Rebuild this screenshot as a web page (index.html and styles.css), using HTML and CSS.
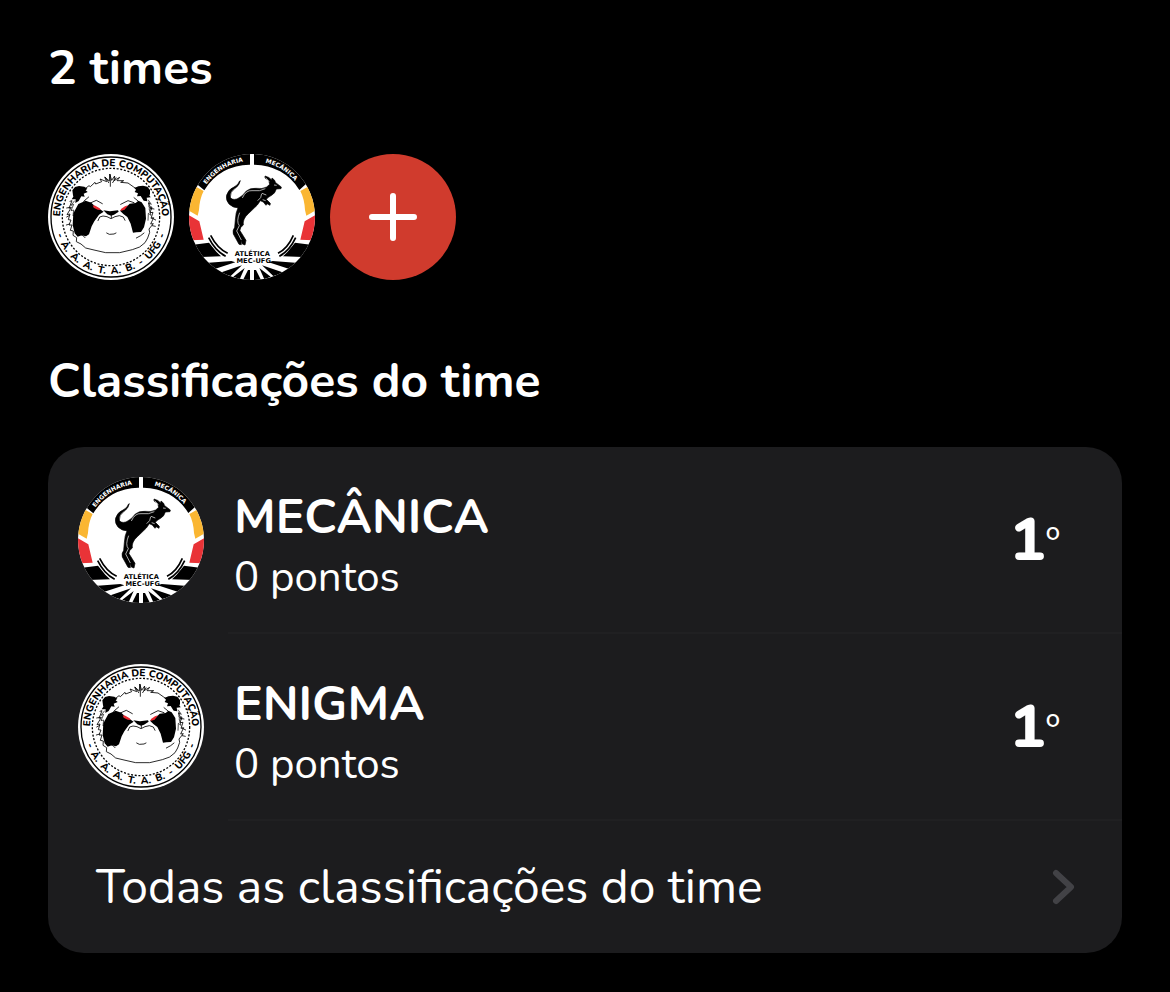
FILE: index.html
```html
<!DOCTYPE html>
<html lang="pt-BR">
<head>
<meta charset="utf-8">
<meta name="viewport" content="width=device-width, initial-scale=1">
<title>Times</title>
<link rel="stylesheet" href="styles.css">
</head>
<body>
<svg class="sprite" aria-hidden="true">
  <symbol id="panda" viewBox="24 26 378 378">
    <circle cx="213" cy="215" r="189" fill="#fff"/>
    <circle cx="213" cy="215" r="180" fill="none" stroke="#000" stroke-width="4"/>
    <path id="panda-top" d="M60 230L60 215A153 153 0 0 1 366 215L366 230" fill="none"/>
    <path id="panda-bottom" d="M42 215A171 171 0 0 0 384 215" fill="none"/>
    <text class="seal-text"><textPath href="#panda-top" startOffset="50%" text-anchor="middle">ENGENHARIA DE COMPUTAÇÃO</textPath></text>
    <text class="seal-text"><textPath href="#panda-bottom" startOffset="50%" text-anchor="middle">-&#160; A.&#160; A.&#160; A.&#160; T.&#160; A.&#160; B.&#160; -&#160; UFG&#160; -</textPath></text>
    <circle cx="213" cy="215" r="146" fill="none" stroke="#000" stroke-width="4" stroke-dasharray="6 5"/>
    <g fill="none" stroke="#000" stroke-width="2.5" stroke-linejoin="round" stroke-linecap="round">
      <path d="M133 132l14-11 4 3 14-13 2 5 18-7-5-8 20 8-6-14 14 12 1-21 6 19 9-13-2 14 17-10-8 10 20 0-9 5 22 2 17 12 14 10M211 88v35M196 96l10 16M228 97l-10 15"/>
      <path d="M90 168l6-2-9 23 7-3-13 22 9-2-5 17 8 1-6 15 9 0-5 16 9 2-1 13 11 7-1 12 14 7 14 12 25 6 35 8 42 0 38-9 22-8 16-13 8-14 6-17-2-10 13-16-8 1 9-19-8 2 6-18-9 1 6-17-9 1 0-16"/>
      <path d="M80 215l9-5M79 239l10-3M347 224l-11-6M346 243l-9-2M80 188l10-2M342 191l-11-2"/>
      <path d="M118 267l10 3 7 7M312 263l-10 8-13 7M174 226l5-11 10-3 12 2 12 6 12-6 13-3 12 4 5 10M200 263l8 4 14-1 6-3M214 204v13"/>
      <path d="M151 173l18-8 18 10M242 177l22-11 18 6M131 168l15-13M293 166l-11-9"/>
    </g>
    <path d="M99 150l-2-15 8-10 12-3 16 2 9 6-5 5 6 5-12 5 3 9-10-1-8 14-10 6 1-11-12 0 5-8zM330 147l0-13-8-10-13-3-14 2-12 5 5 5-4 7 10 4-3 9 11-1 9 14 11 2-2-11 12-1-4-6z"/>
    <path d="M115 176l22-10 17 6 10 10 16 10 11 7-14 9-14 20-8 15-8 24-9 6-13-3-12 4-9-10-6-25 2-35zM305 171l-10-5-8 7-18 2-12 12-17 9 10 10 12 9 10 20 7 27 10-1 14-1 9-14 6-26-2-32z"/>
    <path d="M190 195l20 3 24-3 2 4-14 9-9 3-11-4z"/>
    <path d="M158 180l8 1 13 8 3 5-9-1-12-6zM264 180l-9 3-12 8-2 6 13-4z" fill="#e9282f"/>
    <path d="M104 166l-11 14 8-3-8 19 8-2-2 18 7-5 2 20M324 163l10 14-9-4 10 19-8-2 6 20-8-6-1 22" fill="none" stroke="#000" stroke-width="2"/>
  </symbol>

  <symbol id="kangaroo" viewBox="21 26 378 378">
    <clipPath id="disc"><circle cx="210" cy="215" r="189"/></clipPath>
    <g clip-path="url(#disc)">
      <path d="M21 26h378v378H21z" fill="#fff"/>
      <path d="M38 95L90 26H204V58A157 157 0 0 0 67 135L45 117zM216 26H330L382 95 372 116 352 134A157 157 0 0 0 216 58z"/>
      <path d="M20 112L38 122 65 137Q53 160 51 194L47 211 20 196zM400 112L382 122 355 137Q367 160 369 194L373 211 400 196z" fill="#fab632"/>
      <path d="M20 209l32 19 13 55-38 2-10-20zM400 209l-32 19-13 55 38 2 10-20z" fill="#e93337"/>
      <path d="M28 299l53-7 22 27 14 14-66 2zM392 299l-53-7-22 27-14 14 66 2zM80 352l68-5 12 4-62 20zM340 352l-68-5-12 4 62 20z"/>
      <path d="M112 383l68-23-34 32zM308 383l-68-23 34 32zM154 394l34-26-15 34zM266 394l-34-26 15 34zM183 404l15-30 6 0v30zM237 404l-15-30-6 0v30z"/>
      <path d="M86 270Q105 308 137 324M80 277Q99 316 131 333M334 270Q318 308 288 324M341 277Q323 316 292 333" fill="none" stroke="#000" stroke-width="5"/>
      <path id="kangaroo-left" d="M62 135A168 168 0 0 1 204 47" fill="none"/>
      <path id="kangaroo-right" d="M216 47A168 168 0 0 1 358 135" fill="none"/>
      <text class="rim-text"><textPath href="#kangaroo-left" startOffset="50%" text-anchor="middle">ENGENHARIA</textPath></text>
      <text class="rim-text"><textPath href="#kangaroo-right" startOffset="50%" text-anchor="middle">MECÂNICA</textPath></text>
      <text class="base-text" x="211" y="333" text-anchor="middle">ATLÉTICA</text>
      <text class="base-text" x="215" y="352" text-anchor="middle">MEC-UFG</text>
      <path d="M175 106Q172 121 159 129Q143 140 145 156Q149 165 165 161Q181 154 193 137Q205 127 222 129Q241 132 254 125L263 117L260 105L249 98L249 92Q262 95 269 104L270 98Q279 103 281 112L298 125L297 130L283 131Q280 143 270 149L259 156L253 162L265 174L264 180L255 175L252 180L244 170L235 166L226 179Q212 193 199 205Q181 221 184 239Q172 247 174 256L192 285L189 299L181 296L177 285L178 298L171 297L154 266Q151 256 158 246L160 223Q161 202 168 187Q153 188 141 176Q130 164 134 149Q139 132 156 125Q170 118 172 108Z" stroke="#000" stroke-width="2"/>
      <path d="M181 158Q192 134 210 136Q235 139 250 130M239 145Q239 158 227 166M242 163l9 3M276 119l8 1M251 97l11 13M240 144l13 5M173 202Q162 229 172 241L164 257L178 284" fill="none" stroke="#fff" stroke-width="2"/>
    </g>
  </symbol>
</svg>

<main class="page">
  <section>
    <h2 class="title">2 times</h2>
    <div class="teams">
      <svg class="badge" role="img" aria-label="Enigma"><use href="#panda"/></svg>
      <svg class="badge" role="img" aria-label="Mecânica"><use href="#kangaroo"/></svg>
      <button class="add" type="button" aria-label="Adicionar time">
        <svg viewBox="0 0 48 48"><path d="M24 3v42M3 24h42"/></svg>
      </button>
    </div>
  </section>

  <section>
    <h2 class="title">Classificações do time</h2>
    <div class="card">
      <div class="row">
        <svg class="badge" role="img" aria-label="Mecânica"><use href="#kangaroo"/></svg>
        <div class="info">
          <h3 class="name">MECÂNICA</h3>
          <p class="points">0 pontos</p>
        </div>
        <p class="rank">1<span class="ordinal">º</span></p>
      </div>
      <div class="row">
        <svg class="badge" role="img" aria-label="Enigma"><use href="#panda"/></svg>
        <div class="info">
          <h3 class="name">ENIGMA</h3>
          <p class="points">0 pontos</p>
        </div>
        <p class="rank">1<span class="ordinal">º</span></p>
      </div>
      <a class="all" href="#">
        <span>Todas as classificações do time</span>
        <svg class="chevron" viewBox="0 0 24 36"><path d="M4 4l15 14L4 32"/></svg>
      </a>
    </div>
  </section>
</main>
</body>
</html>
```
FILE: styles.css
```css
* {
  box-sizing: border-box;
  margin: 0;
  padding: 0;
}

body {
  background: #000;
  color: #fff;
  font-family: Nunito, "Open Sans", sans-serif;
}

.sprite {
  display: block;
  width: 0;
  height: 0;
}

.page {
  padding: 36px 48px 40px;
}

.title {
  font-size: 48px;
  line-height: 64px;
  font-weight: 700;
}

.teams {
  display: flex;
  gap: 15px;
  padding: 54px 0 69px;
}

.badge {
  display: block;
  flex: none;
  width: 126px;
  height: 126px;
}

.seal-text {
  font: 800 30px Nunito, "Open Sans", sans-serif;
}

.rim-text {
  fill: #fff;
  font: 700 18px "DejaVu Sans", sans-serif;
}

.base-text {
  font: 700 20px "DejaVu Sans", sans-serif;
}

.add {
  display: grid;
  place-items: center;
  width: 126px;
  height: 126px;
  border: 0;
  border-radius: 50%;
  background: #d03b2d;
  cursor: pointer;
}

.add svg {
  width: 48px;
  height: 48px;
  fill: none;
  stroke: #fff;
  stroke-width: 6;
  stroke-linecap: round;
}

.card {
  margin-top: 34px;
  border-radius: 36px;
  background: #1c1c1e;
  overflow: hidden;
}

.row {
  display: flex;
  align-items: center;
  gap: 30px;
  padding: 30px 62px 31px 30px;
  background: linear-gradient(#202022, #202022) 180px 100% / 100% 2px no-repeat;
}

.info {
  flex: 1;
  padding-top: 12px;
}

.name {
  font-size: 48px;
  line-height: 56px;
  font-weight: 700;
}

.points {
  padding-top: 8px;
  font-size: 42px;
  line-height: 50px;
  font-weight: 400;
}

.rank {
  display: flex;
  align-items: center;
  font-size: 60px;
  line-height: 70px;
  font-weight: 800;
}

.ordinal {
  padding-top: 8px;
  font-size: 42px;
  font-weight: 400;
  line-height: 62px;
}

.all {
  display: flex;
  align-items: center;
  justify-content: space-between;
  padding: 34px 46px 34px 48px;
  color: inherit;
  font-size: 48px;
  line-height: 64px;
  font-weight: 400;
  text-decoration: none;
}

.chevron {
  flex: none;
  width: 24px;
  height: 36px;
  fill: none;
  stroke: #424246;
  stroke-width: 6;
  stroke-linecap: round;
  stroke-linejoin: round;
}
```
